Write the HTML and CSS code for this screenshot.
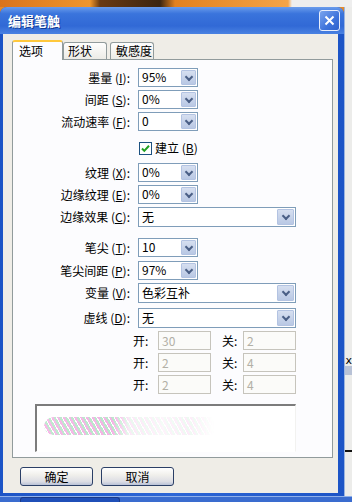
FILE: index.html
```
<!DOCTYPE html>
<html lang="zh">
<head>
<meta charset="UTF-8">
<title>编辑笔触</title>
<link rel="stylesheet" href="styles.css">
</head>
<body>

<div class="photo"></div>

<div class="stage">
  <div class="win">
    <div class="title">
      <span>编辑笔触</span>
      <i class="close">
        <svg width="11" height="11" viewBox="0 0 11 11"><path d="M1.5 1.5l8 8M9.5 1.5l-8 8" stroke="#fff" stroke-width="2"/></svg>
      </i>
    </div>

    <div class="body">
      <!-- 标签页 -->
      <div class="tabs">
        <div class="tab on">选项</div>
        <div class="tab t2">形状</div>
        <div class="tab t3">敏感度</div>
      </div>

      <div class="panel">
        <div class="row first"><label class="lab">墨量 (<u>I</u>):</label><div class="combo"><span>95%</span><b></b></div></div>
        <div class="row"><label class="lab">间距 (<u>S</u>):</label><div class="combo"><span>0%</span><b></b></div></div>
        <div class="row"><label class="lab">流动速率 (<u>F</u>):</label><div class="combo"><span>0</span><b></b></div></div>

        <div class="row chk">
          <i class="box"><svg width="11" height="11" viewBox="0 0 11 11"><path d="M2 5.5l2.3 2.4L9 2.8" fill="none" stroke="#21a121" stroke-width="2"/></svg></i>
          <span>建立 (<u>B</u>)</span>
        </div>

        <div class="row g2"><label class="lab">纹理 (<u>X</u>):</label><div class="combo"><span>0%</span><b></b></div></div>
        <div class="row"><label class="lab">边缘纹理 (<u>E</u>):</label><div class="combo"><span>0%</span><b></b></div></div>
        <div class="row"><label class="lab">边缘效果 (<u>C</u>):</label><div class="combo wide"><span>无</span><b></b></div></div>

        <div class="row g3"><label class="lab">笔尖 (<u>T</u>):</label><div class="combo"><span>10</span><b></b></div></div>
        <div class="row g4"><label class="lab">笔尖间距 (<u>P</u>):</label><div class="combo"><span>97%</span><b></b></div></div>
        <div class="row"><label class="lab">变量 (<u>V</u>):</label><div class="combo wide"><span>色彩互补</span><b></b></div></div>
        <div class="row g5"><label class="lab">虚线 (<u>D</u>):</label><div class="combo wide"><span>无</span><b></b></div></div>

        <div class="row pair g6"><em>开:</em><div class="off">30</div><em class="k">关:</em><div class="off">2</div></div>
        <div class="row pair"><em>开:</em><div class="off">2</div><em class="k">关:</em><div class="off">4</div></div>
        <div class="row pair"><em>开:</em><div class="off">2</div><em class="k">关:</em><div class="off">4</div></div>

        <div class="preview"><div class="stroke"></div></div>
      </div>

      <div class="btns">
        <button>确定</button>
        <button>取消</button>
      </div>
    </div>
  </div>

  <div class="side">
    <span class="x">x</span>
    <div class="band"></div>
    <div class="line"></div>
  </div>
</div>

<div class="taskbar"><div class="task"></div></div>

</body>
</html>
```

FILE: styles.css
```
*{margin:0;padding:0;box-sizing:border-box}
body{width:352px;height:502px;overflow:hidden;background:#e6e6e4;font:12px "Noto Sans CJK SC","DejaVu Sans",sans-serif;color:#000}
u{text-decoration:underline}
em{font-style:normal}

/* 背景 */
.photo{height:7px;background:linear-gradient(90deg,#d9731c 0,#f0962c 90px,#6a3a12 100px,#3b2510 160px,#e3811e 175px,#f4a448 288px,#eeeeee 292px)}
.stage{display:flex;height:489px;background:linear-gradient(#e58a2a 0,#d97b22 12px,#e6e6e4 12px)}
.taskbar{height:6px;background:#3a6ccf;border-top:1px solid #8fb0ea;padding-left:20px}
.task{width:100px;height:5px;border:1px solid #1a3a8a;border-bottom:0;border-radius:3px 3px 0 0;background:#1f4fb8}

/* 窗口 */
.win{width:346px;display:flex;flex-direction:column;background:linear-gradient(90deg,#1c54c6,#2d66d6 50%,#1c54c6);border-radius:7px 7px 0 0;padding-bottom:3px}
.title{height:27px;display:flex;align-items:center;justify-content:space-between;padding:0 4px 1px 8px;border-radius:7px 7px 0 0;background:linear-gradient(#6a9cec,#3a74dc 25%,#3169d6 70%,#4a82e2);color:#fff;font-size:13px;font-weight:bold;text-shadow:1px 1px #123a92}
.close{width:21px;height:21px;border:1px solid #e8eefc;border-radius:3px;background:linear-gradient(135deg,#7aa4ee,#3e73db 60%,#2e62cc);display:flex;align-items:center;justify-content:center}
.close svg{display:block}

.body{flex:1;margin:0 6px 0 3px;background:#efede7;padding:6px 5px 0 9px;display:flex;flex-direction:column}

/* 标签 */
.tabs{display:flex;align-items:flex-end;height:19px}
.tab{height:17px;width:44px;padding-left:4px;border:1px solid #919b9c;border-bottom:0;border-radius:3px 3px 0 0;background:linear-gradient(#fefefe,#ecebe6);line-height:15px;color:#000}
.tab.on{width:51px;height:20px;padding-left:6px;margin-bottom:-1px;border-top:2px solid #ffc83c;background:#fcfcfe;position:relative;z-index:1;line-height:17px}
.tab.t3{margin-left:3px;padding-left:5px}

.panel{height:399px;border:1px solid #919b9c;background:#fcfcfe;padding-top:8px}

/* 行 */
.row{display:flex;align-items:center;height:19px;margin-top:3px}
.row.first{margin-top:0}
.row.chk{margin-top:7px;padding-left:126px}
.row.g2{margin-top:6px}
.row.g3{margin-top:12px}
.row.g4{margin-top:4px}
.row.g5{margin-top:6px}
.row.g6{margin-top:4px}
.lab{width:117px;margin-right:8px;text-align:right;white-space:nowrap;line-height:19px}

.combo{display:flex;width:60px;height:19px;border:1px solid #7f9db9;background:#fff}
.combo span{flex:1;padding-left:3px;line-height:16px}
.combo b{width:15px;margin:1px;background:linear-gradient(#d6dff0,#b9c8e4);border:1px solid #b3c3e2;border-radius:1px;display:flex;align-items:center;justify-content:center}
.combo b::after{content:"";width:4px;height:4px;border-right:2px solid #4a5f86;border-bottom:2px solid #4a5f86;transform:translateY(-1px) rotate(45deg)}
.combo.wide{width:158px;height:20px}
.combo.wide span{line-height:17px}
.combo.wide b{width:17px}

.box{width:13px;height:13px;border:1px solid #1c5180;background:#fff;display:flex;align-items:center;justify-content:center;margin-top:2px}
.chk span{margin-left:3px}

.pair em{width:25px;padding-left:120px;box-sizing:content-box;color:#000}
.pair em.k{width:21px;padding-left:11px}
.off{width:53px;height:19px;border:1px solid #c6c4bc;background:#fbfbf9;color:#b2b0a6;padding-left:3px;line-height:17px}

/* 预览 */
.preview{margin:10px 0 0 22px;width:261px;height:48px;border-top:2px solid #7c7c7c;border-left:2px solid #7c7c7c;border-right:1px solid #f2f2f0;border-bottom:1px solid #fff;background:#fff;padding:11px 0 0 7px}
.stroke{width:170px;height:18px;background:repeating-linear-gradient(60deg,rgba(235,130,210,.6) 0 2px,rgba(130,210,160,.55) 2px 4px,rgba(255,255,255,0) 4px 5px);-webkit-mask-image:linear-gradient(90deg,rgba(0,0,0,.9) 0,#000 40%,rgba(0,0,0,.3) 50%,rgba(0,0,0,.15) 70%,rgba(0,0,0,.25) 85%,transparent);border-radius:9px 3px 3px 9px;filter:blur(.6px)}

/* 按钮 */
.btns{display:flex;gap:8px;margin-top:9px;padding-left:8px}
button{width:73px;height:19px;border:1px solid #2b3f66;border-radius:3px;background:linear-gradient(#ffffff,#f1f0ec 40%,#dcdde4 80%,#b9c2d8);font:12px "Noto Sans CJK SC","DejaVu Sans",sans-serif;color:#000;line-height:15px}

/* 右边 */
.side{flex:1;display:flex;flex-direction:column;background:#ececea;border-left:1px solid #9ab4e0}
.x{margin-top:348px;font:11px "DejaVu Sans",sans-serif;line-height:11px}
.band{height:9px;background:#b8c2d6}
.line{height:2px;margin-top:75px;background:#111}
```
